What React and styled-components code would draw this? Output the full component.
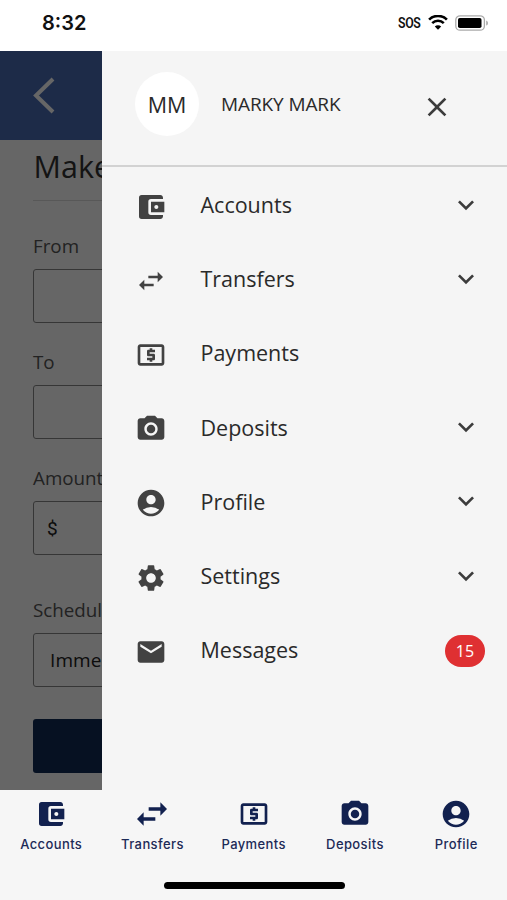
import React from "react";
import styled, { createGlobalStyle } from "styled-components";
import {
  MdAccountBalanceWallet,
  MdSwapHoriz,
  MdLocalAtm,
  MdCameraAlt,
  MdAccountCircle,
  MdSettings,
  MdEmail,
  MdKeyboardArrowDown,
  MdClose,
} from "react-icons/md";

const GlobalStyle = createGlobalStyle`
  * { box-sizing: border-box; }
  body { margin: 0; font-family: "Open Sans", "Noto Sans", sans-serif; }
`;

const Phone = styled.div`
  width: 507px;
  height: 900px;
  display: flex;
  flex-direction: column;
  overflow: hidden;
  background: #fff;
`;

const StatusBar = styled.header`
  flex: 0 0 51px;
  display: flex;
  align-items: center;
  justify-content: space-between;
  padding: 0 18px 6px 42px;
  color: #111;
  font-family: Inter, sans-serif;
`;

const Clock = styled.time`
  font-size: 20px;
  font-weight: 600;
  line-height: 24px;
`;

const StatusIcons = styled.div`
  display: flex;
  align-items: center;
`;

const Sos = styled.span`
  font-family: Roboto, sans-serif;
  font-size: 14px;
  font-weight: 600;
  line-height: 16px;
  letter-spacing: -0.4px;
  width: 30px;

  > span {
    display: inline-block;
    transform: scaleX(0.88);
    transform-origin: left;
  }
`;

const Screen = styled.main`
  flex: 0 0 739px;
  position: relative;
  overflow: hidden;
  background: #fff;
`;

const TitleBar = styled.div`
  height: 88.5px;
  padding: 25.5px 0 0 33px;
  background: #4a6cb5;
`;

const Form = styled.form`
  display: flex;
  flex-direction: column;
  padding: 0.5px 33px 0;
`;

const Title = styled.h1`
  margin: 0;
  padding: 4px 0 0 0.5px;
  height: 61px;
  font-size: 30.5px;
  font-weight: 400;
  line-height: 44px;
  white-space: nowrap;
  color: #333;
  border-bottom: 1px solid #dcdcdc;
`;

const Field = styled.label`
  display: block;
  padding-top: ${(p) => p.$gap}px;
`;

const Caption = styled.span`
  display: block;
  height: 36px;
  font-size: 18.8px;
  line-height: 26px;
  color: #555;
`;

const Input = styled.div`
  height: 54px;
  display: flex;
  align-items: center;
  padding-left: ${(p) => p.$inset || 13}px;
  border: 1.5px solid #888;
  border-radius: 3px;
  font-size: 19px;
  letter-spacing: 0.1px;
  color: #222;
  white-space: nowrap;
`;

const Dollar = styled.span`
  font-family: Roboto, sans-serif;
  font-size: 19px;
`;

const Submit = styled.div`
  height: 54px;
  margin-top: 32px;
  border-radius: 3px;
  background: #112c55;
`;

const Shade = styled.div`
  position: absolute;
  inset: 0;
  background: rgba(0, 0, 0, 0.6);
`;

const Drawer = styled.aside`
  position: absolute;
  top: 0;
  right: 0;
  bottom: 0;
  width: 405px;
  background: #f5f5f5;
  color: #2a2a2a;
`;

const UserRow = styled.div`
  height: 116px;
  display: flex;
  align-items: center;
  padding: 0 57px 8px 33px;
  border-bottom: 2px solid #d2d2d2;
`;

const Avatar = styled.div`
  width: 64px;
  height: 64px;
  border-radius: 50%;
  display: flex;
  align-items: center;
  justify-content: center;
  background: #fff;
  font-size: 21.5px;
`;

const UserName = styled.span`
  flex: 1;
  margin-left: 22px;
  font-size: 19px;
  letter-spacing: -0.1px;
`;

const CloseIcon = styled(MdClose)`
  width: 32px;
  height: 32px;
  margin-top: 6px;
  margin-right: -3px;
  color: #3c3c3c;
`;

const MenuList = styled.nav`
  display: flex;
  flex-direction: column;
`;

const MenuItem = styled.div`
  height: 74.2px;
  display: flex;
  align-items: center;
  padding: 0 22px 0 32.7px;

  > svg:first-child {
    width: 32px;
    height: 32px;
    margin-top: 5px;
    color: #424242;
  }
`;

const MenuLabel = styled.span`
  flex: 1;
  margin: 2px 0 0 33.8px;
  font-size: 21.5px;
  line-height: 30px;
`;

const Chevron = styled(MdKeyboardArrowDown)`
  width: 32px;
  height: 32px;
  margin-right: 3px;
  margin-top: 1px;
  color: #3c3c3c;
`;

const Badge = styled.span`
  width: 40px;
  height: 32px;
  margin-top: 3px;
  border-radius: 16px;
  display: flex;
  align-items: center;
  justify-content: center;
  background: #df3032;
  color: #fff;
  font-size: 16px;
`;

const TabBar = styled.nav`
  flex: 0 0 76px;
  display: grid;
  grid-template-columns: repeat(5, 101.25px);
  padding-left: 0.6px;
  background: #f6f6f6;
`;

const Tab = styled.div`
  display: flex;
  flex-direction: column;
  align-items: center;
  padding-top: 7.5px;
  color: #1d2a57;
  font-family: Inter, sans-serif;
  font-size: 13px;
  font-weight: 500;
  letter-spacing: 0.4px;
  line-height: 18px;

  > svg {
    width: 32px;
    height: 32px;
    margin-bottom: 5.5px;
    color: #12214f;
    transform: scale(${(p) => p.$scale || 1});
  }
`;

const HomeArea = styled.footer`
  flex: 1;
  display: flex;
  justify-content: center;
  padding: 16px 0 0 1px;
  background: #f6f6f6;
`;

const HomeBar = styled.div`
  width: 181px;
  height: 7px;
  border-radius: 4px;
  background: #000;
`;

const menu = [
  { label: "Accounts", icon: MdAccountBalanceWallet, opens: true },
  { label: "Transfers", icon: MdSwapHoriz, opens: true },
  { label: "Payments", icon: MdLocalAtm },
  { label: "Deposits", icon: MdCameraAlt, opens: true },
  { label: "Profile", icon: MdAccountCircle, opens: true },
  { label: "Settings", icon: MdSettings, opens: true },
  { label: "Messages", icon: MdEmail, count: 15 },
];

const tabs = [
  { label: "Accounts", icon: MdAccountBalanceWallet },
  { label: "Transfers", icon: MdSwapHoriz, scale: 1.25 },
  { label: "Payments", icon: MdLocalAtm },
  { label: "Deposits", icon: MdCameraAlt },
  { label: "Profile", icon: MdAccountCircle },
];

const WifiIcon = () => (
  <svg width="20" height="15" viewBox="0 0 20 15" fill="none" stroke="#000">
    <path d="M1.1 4.6a12.8 12.8 0 0 1 17.8 0" strokeWidth="2.7" />
    <path d="M4.2 8.1a8.2 8.2 0 0 1 11.6 0" strokeWidth="2.5" />
    <path d="M10 14.7 6.8 11.5a4.5 4.5 0 0 1 6.4 0Z" fill="#000" stroke="none" />
  </svg>
);

const BatteryIcon = styled(({ className }) => (
  <svg className={className} width="34" height="16" viewBox="0 0 34 16">
    <rect x=".8" y=".8" width="28.6" height="14.4" rx="4.3" fill="none" stroke="#aaa" strokeWidth="1.3" />
    <rect x="3" y="3" width="23.5" height="10" rx="1.8" fill="#000" />
    <path d="M31.2 5.4c2.3.8 2.3 4.4 0 5.2Z" fill="#aaa" />
  </svg>
))`
  margin-left: 7px;
`;

export default function App() {
  return (
    <>
      <GlobalStyle />
      <Phone>
        <StatusBar>
          <Clock>8:32</Clock>
          <StatusIcons>
            <Sos>
              <span>SOS</span>
            </Sos>
            <WifiIcon />
            <BatteryIcon />
          </StatusIcons>
        </StatusBar>
        <Screen>
          <TitleBar>
            <svg width="24" height="38" viewBox="0 0 24 38" fill="none" stroke="#fff" strokeWidth="4">
              <path d="M20 2 3 18.5 20 35" />
            </svg>
          </TitleBar>
          <Form>
            <Title>Make a Payment</Title>
            <Field $gap={32}>
              <Caption>From</Caption>
              <Input />
            </Field>
            <Field $gap={26}>
              <Caption>To</Caption>
              <Input />
            </Field>
            <Field $gap={26}>
              <Caption>Amount</Caption>
              <Input>
                <Dollar>$</Dollar>
              </Input>
            </Field>
            <Field $gap={42}>
              <Caption>Schedule</Caption>
              <Input $inset={16}>Immediately</Input>
            </Field>
            <Submit />
          </Form>
          <Shade />
          <Drawer>
            <UserRow>
              <Avatar>MM</Avatar>
              <UserName>MARKY MARK</UserName>
              <CloseIcon />
            </UserRow>
            <MenuList>
              {menu.map(({ label, icon: Icon, opens, count }) => (
                <MenuItem key={label}>
                  <Icon />
                  <MenuLabel>{label}</MenuLabel>
                  {opens && <Chevron />}
                  {count && <Badge>{count}</Badge>}
                </MenuItem>
              ))}
            </MenuList>
          </Drawer>
        </Screen>
        <TabBar>
          {tabs.map(({ label, icon: Icon, scale }) => (
            <Tab key={label} $scale={scale}>
              <Icon />
              {label}
            </Tab>
          ))}
        </TabBar>
        <HomeArea>
          <HomeBar />
        </HomeArea>
      </Phone>
    </>
  );
}
